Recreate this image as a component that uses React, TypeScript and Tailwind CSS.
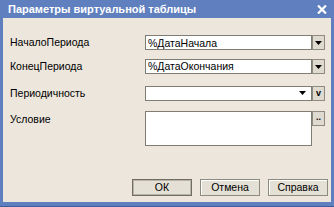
import React from 'react';

const Arrow = () => (
  <svg width="7" height="4" viewBox="0 0 7 4">
    <path d="M0 0h7L3.5 4z" fill="#000" />
  </svg>
);

const SideButton = ({ children }: { children: React.ReactNode }) => (
  <div className="w-[13px] h-full bg-[#dedad0] border border-[#8d8b80] flex items-center justify-center">
    {children}
  </div>
);

const Field = ({ value, extra }: { value?: string; extra?: boolean }) => (
  <div className="w-[180px] h-[15px] flex">
    <div className="flex-1 bg-white border border-[#7f7d72] flex items-center pl-[2px] text-[10.5px] leading-none text-black">
      <span className="flex-1">{value}</span>
      {extra && (
        <span className="pr-[5px] flex items-center">
          <Arrow />
        </span>
      )}
    </div>
    <SideButton>
      {extra ? <span className="text-[9px] font-bold leading-none">v</span> : <Arrow />}
    </SideButton>
  </div>
);

const Btn = ({ label, def }: { label: string; def?: boolean }) => (
  <button
    className={`w-[60px] h-[17px] bg-[#e4e0d6] text-[10.5px] leading-none text-black border ${
      def ? 'border-[#6f6d62] shadow-[inset_0_0_0_1px_#b9b5a8]' : 'border-[#8d8b80] shadow-[inset_1px_1px_0_#ffffff]'
    }`}
  >
    {label}
  </button>
);

export default function App() {
  return (
    <div
      className="w-[334px] h-[207px] bg-[#5f7fbf] flex flex-col pl-[3px] pr-[3px] pb-[4px] border-b border-[#3d5c9c]"
      style={{ fontFamily: '"Liberation Sans", Arial, sans-serif' }}
    >
      {/* Title bar */}
      <div className="h-[18px] flex items-center justify-between pl-[5px] pr-[4px]">
        <span className="text-white font-bold text-[11px] leading-none">Параметры виртуальной таблицы</span>
        <svg width="10" height="9" viewBox="0 0 10 9">
          <path d="M1 0.5l8 8M9 0.5l-8 8" stroke="#fff" strokeWidth="2.2" />
        </svg>
      </div>

      {/* Body */}
      <div className="flex-1 bg-[#ece6dc] flex flex-col pt-[17px] pl-[7px]">
        <div className="flex items-center">
          <span className="w-[135px] text-[10.5px] text-black">НачалоПериода</span>
          <Field value="%ДатаНачала" />
        </div>
        <div className="flex items-center mt-[8px]">
          <span className="w-[135px] text-[10.5px] text-black">КонецПериода</span>
          <Field value="%ДатаОкончания" />
        </div>
        <div className="flex items-center mt-[11px]">
          <span className="w-[135px] text-[10.5px] text-black">Периодичность</span>
          <Field extra />
        </div>
        <div className="flex items-start mt-[10px]">
          <span className="w-[135px] text-[10.5px] text-black pt-[1px]">Условие</span>
          <div className="w-[167px] h-[35px] bg-white border border-[#7f7d72]" />
          <div className="h-[15px] flex">
            <SideButton>
              <span className="text-[9px] font-bold leading-none -mt-[3px]">..</span>
            </SideButton>
          </div>
        </div>
        <div className="flex-1" />
        <div className="flex justify-end gap-[8px] pr-[3px] pb-[6px]">
          <Btn label="ОК" def />
          <Btn label="Отмена" />
          <Btn label="Справка" />
        </div>
      </div>
    </div>
  );
}
